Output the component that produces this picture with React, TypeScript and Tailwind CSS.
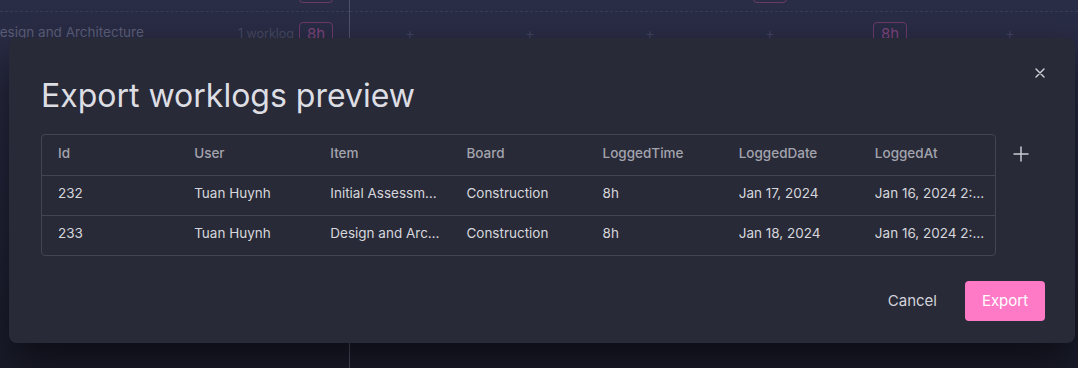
import React from "react";

const cols = ["Id", "User", "Item", "Board", "LoggedTime", "LoggedDate", "LoggedAt"];
const rows = [
  ["232", "Tuan Huynh", "Initial Assessment and Planning", "Construction", "8h", "Jan 17, 2024", "Jan 16, 2024 2:45 PM"],
  ["233", "Tuan Huynh", "Design and Architecture", "Construction", "8h", "Jan 18, 2024", "Jan 16, 2024 2:45 PM"],
];

function Badge() {
  return (
    <div className="w-[34px] h-[22px] shrink-0 rounded-[4px] border border-[#6a3a6a] text-[#7b4379] text-[15px] leading-none flex items-center justify-center">
      8h
    </div>
  );
}

function Plus() {
  return <span className="text-[#40435f] text-[14px] leading-none">+</span>;
}

export default function App() {
  const font = { fontFamily: "Inter, 'Noto Sans', sans-serif" };
  return (
    <div
      className="relative w-[1078px] h-[368px] overflow-hidden bg-gradient-to-b from-[#2a2d46] via-[#22253a] to-[#1a1c2b]"
      style={font}
    >
      {/* background board */}
      <div className="flex h-full">
        <div className="w-[350px] shrink-0 border-r border-[#4f5167] flex flex-col">
          <div className="h-[12px] shrink-0 overflow-hidden flex items-start justify-end pr-[16px] border-b border-dashed border-[#3a3d57]">
            <div className="mt-[-19px]"><Badge /></div>
          </div>
          <div className="h-[44px] flex items-start pt-[10px]">
            <span className="ml-[-10px] text-[13.5px] text-[#5b5e77] whitespace-nowrap">Design and Architecture</span>
            <span className="ml-auto text-[12.5px] text-[#45485f] mr-[5px] mt-[3px]">1 worklog</span>
            <div className="mr-[16px]"><Badge /></div>
          </div>
        </div>
        <div className="flex-1 flex flex-col">
          <div className="h-[12px] shrink-0 overflow-hidden border-b border-dashed border-[#3a3d57] flex items-start">
            <div className="w-[360px] shrink-0" />
            <div className="w-[120px] shrink-0 flex justify-center mt-[-19px]"><Badge /></div>
          </div>
          <div className="h-[44px] grid grid-cols-[120px_120px_120px_120px_120px_120px] items-start pt-[10px]">
            <div className="flex justify-center pt-[4px]"><Plus /></div>
            <div className="flex justify-center pt-[4px]"><Plus /></div>
            <div className="flex justify-center pt-[4px]"><Plus /></div>
            <div className="flex justify-center pt-[4px]"><Plus /></div>
            <div className="flex justify-center"><Badge /></div>
            <div className="flex justify-center pt-[4px]"><Plus /></div>
          </div>
        </div>
      </div>

      {/* modal */}
      <div className="absolute left-[9px] top-[38px] w-[1066px] h-[305px] rounded-lg bg-[#292a37] shadow-[0_20px_40px_rgba(0,0,0,0.55)] flex flex-col pl-[32px] pr-[30px]">
        <button className="absolute right-[30px] top-[30px] w-[10px] h-[10px] flex items-center justify-center">
          <svg width="10" height="10" viewBox="0 0 10 10" fill="none" stroke="#d4d5dc" strokeWidth="1.4" strokeLinecap="round">
            <path d="M1 1 L9 9 M9 1 L1 9" />
          </svg>
        </button>
        <h1 className="mt-[38px] text-[32px] leading-[40px] text-[#dddee4]" style={{ fontFamily: "Inter, sans-serif" }}>
          Export worklogs preview
        </h1>
        <div className="mt-[18px] flex items-start">
          <div className="w-[955px] border border-[#43454f] rounded-[4px]">
            <div className="grid grid-cols-7 h-[41px] items-center border-b border-[#43454f]">
              {cols.map((c) => (
                <div key={c} className="pl-[16px] pr-[10px] pb-[4px] text-[13.5px] font-medium text-[#a3a4ae] truncate">
                  {c}
                </div>
              ))}
            </div>
            {rows.map((r, i) => (
              <div
                key={i}
                className={`grid grid-cols-7 items-center ${i === 0 ? "h-[40px] border-b border-[#43454f]" : "h-[39px]"}`}
              >
                {r.map((v, j) => (
                  <div key={j} className="pl-[16px] pr-[10px] pb-[4px] text-[13.5px] text-[#d6d7dd] truncate">
                    {v}
                  </div>
                ))}
              </div>
            ))}
          </div>
          <div className="ml-[17px] mt-[12px] w-[16px] h-[16px]">
            <svg width="16" height="16" viewBox="0 0 16 16" fill="none" stroke="#c9cad3" strokeWidth="1.5">
              <path d="M8 0.5 V15.5 M0.5 8 H15.5" />
            </svg>
          </div>
        </div>
        <div className="mt-[25px] flex justify-end items-center">
          <button className="h-[40px] px-[16px] text-[15px] text-[#d2d3da] mr-[12px]">Cancel</button>
          <button className="h-[40px] w-[80px] rounded-[4px] bg-[#ff7ac6] text-[15px] text-white">Export</button>
        </div>
      </div>
    </div>
  );
}
